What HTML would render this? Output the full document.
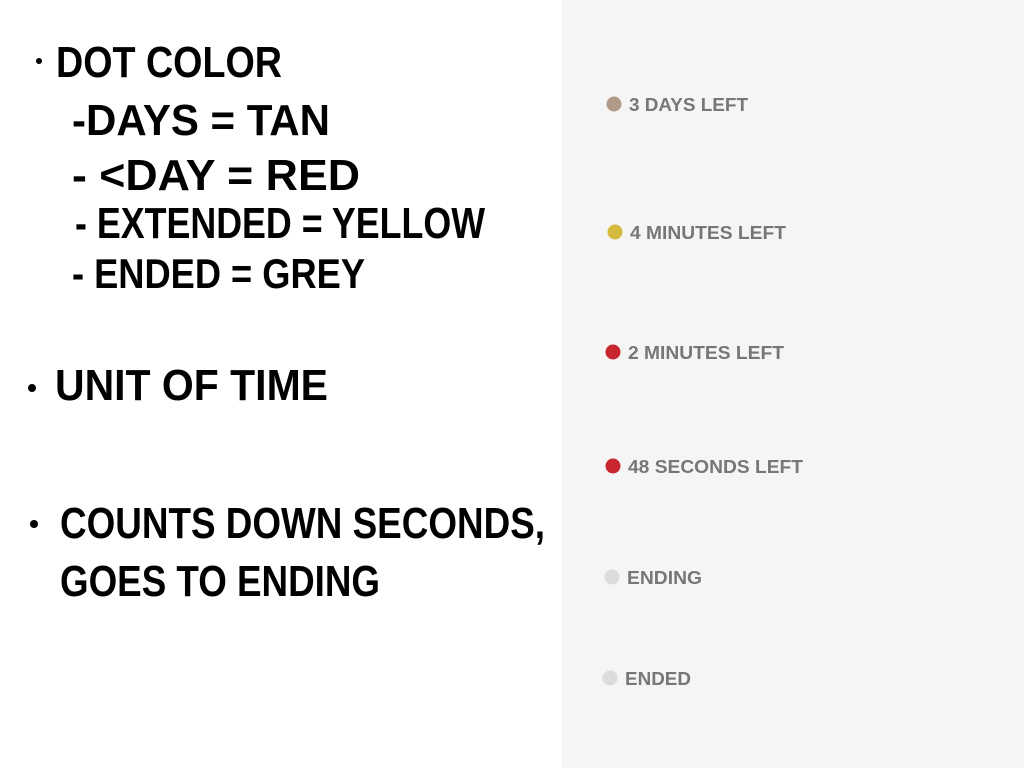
<!DOCTYPE html>
<html><head><meta charset="utf-8"><style>
html,body{margin:0;padding:0;background:#fff;}
svg{display:block}
</style></head><body>
<svg width="1024" height="768" xmlns="http://www.w3.org/2000/svg">
<rect x="0" y="0" width="1024" height="768" fill="#fff"/>
<rect x="562" y="0" width="462" height="768" fill="#f5f5f5"/>
<g font-family="Liberation Sans, sans-serif" font-weight="bold" fill="#000">
<circle cx="39" cy="61" r="3"/>
<text x="56" y="77" font-size="44" textLength="226" lengthAdjust="spacingAndGlyphs">DOT COLOR</text>
<text x="72" y="135" font-size="44" textLength="258" lengthAdjust="spacingAndGlyphs">-DAYS = TAN</text>
<text x="72" y="190" font-size="44" textLength="288" lengthAdjust="spacingAndGlyphs">- &lt;DAY = RED</text>
<text x="75" y="238" font-size="44" textLength="410" lengthAdjust="spacingAndGlyphs">- EXTENDED = YELLOW</text>
<text x="72" y="288" font-size="42" textLength="293" lengthAdjust="spacingAndGlyphs">- ENDED = GREY</text>
<circle cx="32" cy="388" r="4"/>
<text x="55" y="400" font-size="44" textLength="273" lengthAdjust="spacingAndGlyphs">UNIT OF TIME</text>
<circle cx="34" cy="524" r="4"/>
<text x="60" y="538" font-size="44" textLength="485" lengthAdjust="spacingAndGlyphs">COUNTS DOWN SECONDS,</text>
<text x="60" y="596" font-size="44" textLength="320" lengthAdjust="spacingAndGlyphs">GOES TO ENDING</text>
</g>
<g font-family="Liberation Sans, sans-serif" font-weight="bold" fill="#777" font-size="18">
<circle cx="614" cy="104" r="7.5" fill="#b09a88"/>
<text x="629" y="111" textLength="119" lengthAdjust="spacingAndGlyphs">3 DAYS LEFT</text>
<circle cx="615" cy="232" r="7.5" fill="#d6b93f"/>
<text x="630" y="239" textLength="156" lengthAdjust="spacingAndGlyphs">4 MINUTES LEFT</text>
<circle cx="613" cy="352" r="7.5" fill="#c8262e"/>
<text x="628" y="359" textLength="156" lengthAdjust="spacingAndGlyphs">2 MINUTES LEFT</text>
<circle cx="613" cy="466" r="7.5" fill="#c8262e"/>
<text x="628" y="473" textLength="175" lengthAdjust="spacingAndGlyphs">48 SECONDS LEFT</text>
<circle cx="612" cy="577" r="7.5" fill="#dcdcdc"/>
<text x="627" y="584" textLength="75" lengthAdjust="spacingAndGlyphs">ENDING</text>
<circle cx="610" cy="678" r="7.5" fill="#dcdcdc"/>
<text x="625" y="685" textLength="66" lengthAdjust="spacingAndGlyphs">ENDED</text>
</g>
</svg>
</body></html>
